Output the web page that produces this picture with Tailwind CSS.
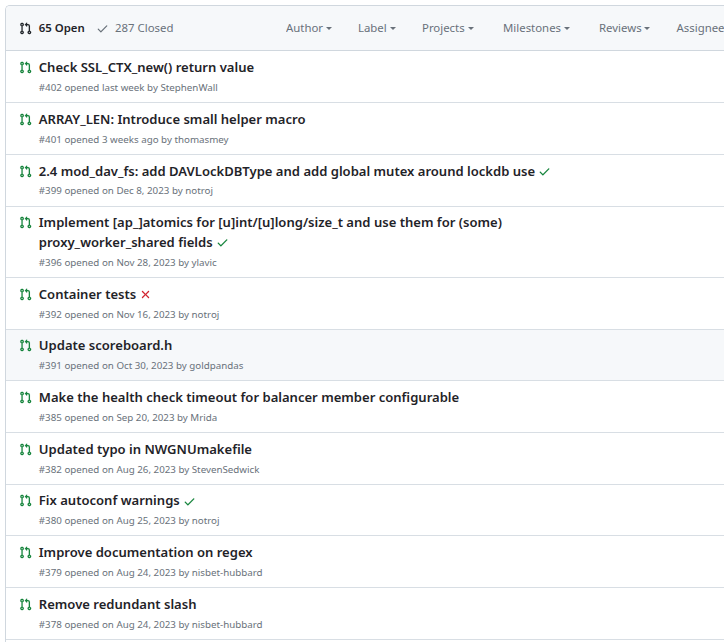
<!DOCTYPE html>
<html lang="en">
<head>
<meta charset="utf-8">
<title>Pull requests</title>
<script src="https://cdn.jsdelivr.net/npm/@tailwindcss/browser@4"></script>
</head>
<body class="h-[642px] overflow-hidden bg-white font-['Noto_Sans',sans-serif] text-[#1f2328]">
<svg class="hidden">
  <symbol id="pr" viewBox="0 0 16 16"><path d="M1.5 3.25a2.25 2.25 0 1 1 3 2.122v5.256a2.251 2.251 0 1 1-1.5 0V5.372A2.25 2.25 0 0 1 1.5 3.25Zm5.677-.177L9.573.677A.25.25 0 0 1 10 .854V2.5h1A2.5 2.5 0 0 1 13.5 5v5.628a2.251 2.251 0 1 1-1.5 0V5a1 1 0 0 0-1-1h-1v1.646a.25.25 0 0 1-.427.177L7.177 3.427a.25.25 0 0 1 0-.354ZM3.75 2.5a.75.75 0 1 0 0 1.5.75.75 0 0 0 0-1.5Zm0 9.5a.75.75 0 1 0 0 1.5.75.75 0 0 0 0-1.5Zm8.25.75a.75.75 0 1 0 1.5 0 .75.75 0 0 0-1.5 0Z"/></symbol>
  <symbol id="check" viewBox="0 0 16 16"><path d="M13.78 4.22a.75.75 0 0 1 0 1.06l-7.25 7.25a.75.75 0 0 1-1.06 0L2.22 9.28a.751.751 0 0 1 .018-1.042.751.751 0 0 1 1.042-.018L6 10.94l6.72-6.72a.75.75 0 0 1 1.06 0Z"/></symbol>
  <symbol id="x" viewBox="0 0 16 16"><path d="M3.72 3.72a.75.75 0 0 1 1.06 0L8 6.94l3.22-3.22a.749.749 0 0 1 1.275.326.749.749 0 0 1-.215.734L9.06 8l3.22 3.22a.749.749 0 0 1-.326 1.275.749.749 0 0 1-.734-.215L8 9.06l-3.22 3.22a.751.751 0 0 1-1.042-.018.751.751 0 0 1-.018-1.042L6.94 8 3.72 4.78a.75.75 0 0 1 0-1.06Z"/></symbol>
</svg>
<main class="h-[642px] overflow-hidden pt-[5px] pl-[5px]">
  <div class="h-[637px] overflow-hidden rounded-tl-[5px] border-t border-l border-[#d0d7de]">
    <header class="flex h-[45.45px] items-center border-b border-[#d0d7de] bg-[#f6f8fa] pb-[1px] text-[11.4px] text-[#69717a]">
      <div class="flex w-[280px] shrink-0 items-center pl-[13px]">
        <svg class="mt-[1px] mr-[6.7px] size-[13px] fill-[#1f2328] stroke-[#1f2328] stroke-[0.1px]"><use href="#pr"/></svg>
        <span class="font-semibold text-[#1f2328]">65 Open</span>
        <svg class="mt-[1px] mr-[6.3px] ml-[11px] size-[13px] fill-current"><use href="#check"/></svg>
        <span>287 Closed</span>
      </div>
      <nav class="flex min-w-0 overflow-hidden whitespace-nowrap">
        <span class="flex w-[72px] shrink-0 items-center gap-[3px]">Author <i class="mt-[2px] border-x-[3px] border-t-[3px] border-x-transparent border-t-current"></i></span>
        <span class="flex w-[64px] shrink-0 items-center gap-[3px]">Label <i class="mt-[2px] border-x-[3px] border-t-[3px] border-x-transparent border-t-current"></i></span>
        <span class="flex w-[81px] shrink-0 items-center gap-[3px]">Projects <i class="mt-[2px] border-x-[3px] border-t-[3px] border-x-transparent border-t-current"></i></span>
        <span class="flex w-[96px] shrink-0 items-center gap-[3px]">Milestones <i class="mt-[2px] border-x-[3px] border-t-[3px] border-x-transparent border-t-current"></i></span>
        <span class="flex w-[77.5px] shrink-0 items-center gap-[2px]">Reviews <i class="mt-[2px] border-x-[3px] border-t-[3px] border-x-transparent border-t-current"></i></span>
        <span class="shrink-0">Assignee</span>
      </nav>
    </header>
    <div id="list"></div>
  </div>
</main>
<script>
const rows = [
  ["Check SSL_CTX_new() return value", "#402 opened last week by StephenWall"],
  ["ARRAY_LEN: Introduce small helper macro", "#401 opened 3 weeks ago by thomasmey"],
  ["2.4 mod_dav_fs: add DAVLockDBType and add global mutex around lockdb use", "#399 opened on Dec 8, 2023 by notroj", "check"],
  ["Implement [ap_]atomics for [u]int/[u]long/size_t and use them for (some)<br>proxy_worker_shared fields", "#396 opened on Nov 28, 2023 by ylavic", "check"],
  ["Container tests", "#392 opened on Nov 16, 2023 by notroj", "x"],
  ["Update scoreboard.h", "#391 opened on Oct 30, 2023 by goldpandas"],
  ["Make the health check timeout for balancer member configurable", "#385 opened on Sep 20, 2023 by Mrida"],
  ["Updated typo in NWGNUmakefile", "#382 opened on Aug 26, 2023 by StevenSedwick"],
  ["Fix autoconf warnings", "#380 opened on Aug 25, 2023 by notroj", "check"],
  ["Improve documentation on regex", "#379 opened on Aug 24, 2023 by nisbet-hubbard"],
  ["Remove redundant slash", "#378 opened on Aug 24, 2023 by nisbet-hubbard"],
];
const marks = {
  check: ' <svg class="ml-[-0.5px] inline-block size-[13px] fill-[#14833b] stroke-[#14833b] stroke-[0.1px] align-[-2.5px]"><use href="#check"/></svg>',
  x: ' <svg class="ml-[-0.6px] inline-block size-[13px] fill-[#d1242f] stroke-[#d1242f] stroke-[0.1px] align-[-2.5px]"><use href="#x"/></svg>',
};
document.getElementById("list").innerHTML = rows.map(([title, meta, mark], i) => `
  <div class="flex border-b border-[#d8dee4] pl-[13px] ${i === 3 ? "h-[71.4px]" : "h-[51.7px]"} ${i === 5 ? "bg-[#f6f8fa]" : ""}">
    <svg class="mt-[9.8px] mr-[6.8px] size-[13px] shrink-0 fill-[#14833b] stroke-[#14833b] stroke-[0.1px]"><use href="#pr"/></svg>
    <div class="whitespace-nowrap pt-[6.85px]">
      <div class="text-[13.05px] leading-[19.6px] font-semibold">${title}${mark ? marks[mark] : ""}</div>
      <div class="${i === 2 ? "mt-[2.8px]" : "mt-[3.25px]"} text-[9.78px] leading-[14.6px] text-[#69717a]">${meta}</div>
    </div>
  </div>`).join("");
</script>
</body>
</html>
